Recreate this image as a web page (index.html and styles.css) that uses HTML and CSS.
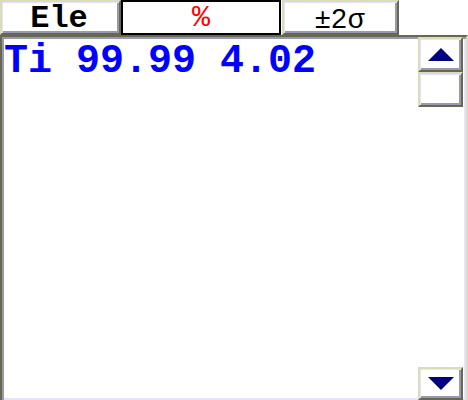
FILE: index.html
```html
<!DOCTYPE html>
<html>
<head>
<meta charset="utf-8">
<link rel="stylesheet" href="styles.css">
</head>
<body>
<div class="panel">
  <div class="header">
    <div class="btn col-ele">Ele</div>
    <div class="col-pct">%</div>
    <div class="btn col-sig">±2σ</div>
  </div>
  <div class="list">
    <div class="rows">
      <div class="row">Ti 99.99 4.02</div>
    </div>
    <div class="scroll">
      <div class="btn sbtn">
        <svg width="26" height="14" viewBox="0 0 26 14"><polygon points="13,0 26,13 0,13" fill="#000080"/></svg>
      </div>
      <div class="btn sbtn"></div>
      <div class="track"></div>
      <div class="btn sbtn down">
        <svg width="26" height="14" viewBox="0 0 26 14"><polygon points="0,0 26,0 13,13" fill="#000080"/></svg>
      </div>
    </div>
  </div>
</div>
</body>
</html>
```
FILE: styles.css
```css
html, body {
  margin: 0;
  padding: 0;
  overflow: hidden;
  background: #ffffff;
}

.panel {
  width: 468px;
  height: 402px;
  display: flex;
  flex-direction: column;
}

/* raised 3D button: light top/left, dark bottom/right */
.btn {
  box-sizing: border-box;
  border: 2px solid;
  border-color: #dcdcb8 #686850 #686850 #dcdcb8;
  box-shadow: inset 1px 1px 0 #e4e4fc, inset -2px -2px 0 #9898b0;
  background: #ffffff;
  display: flex;
  align-items: center;
  justify-content: center;
}

.header {
  display: flex;
  height: 35px;
  flex: none;
}

.col-ele {
  width: 121px;
  font-family: "Liberation Mono", monospace;
  font-weight: bold;
  font-size: 32px;
  color: #000000;
  padding-top: 1px;
  padding-right: 3px;
}

.col-pct {
  box-sizing: border-box;
  width: 160px;
  border: 2px solid #000000;
  display: flex;
  align-items: center;
  justify-content: center;
  font-family: "Liberation Mono", monospace;
  font-size: 30px;
  color: #ff0000;
  padding-top: 1px;
}

.col-sig {
  width: 117px;
  margin-left: 1px;
  font-family: "Liberation Sans", Arial, sans-serif;
  font-size: 28px;
  letter-spacing: 1px;
  color: #000000;
  padding-top: 3px;
}

/* sunken list box */
.list {
  flex: none;
  box-sizing: border-box;
  height: 367px;
  border: 2px solid;
  border-color: #686850 #dcdcb8 #dcdcb8 #686850;
  box-shadow: inset 2px 2px 0 #9898b0, inset -2px -2px 0 #e4e4fc;
  display: flex;
}

.rows {
  flex: 1;
  padding: 5px 0 0 2px;
}

.row {
  font-family: "Liberation Mono", "Courier New", monospace;
  font-weight: bold;
  font-size: 40px;
  line-height: 40px;
  color: #0000ff;
  white-space: pre;
}

.scroll {
  width: 45px;
  margin-right: 3px;
  display: flex;
  flex-direction: column;
}

.sbtn {
  height: 35px;
  flex: none;
}

.track {
  flex: 1;
}

.down {
  height: 33px;
}
```
